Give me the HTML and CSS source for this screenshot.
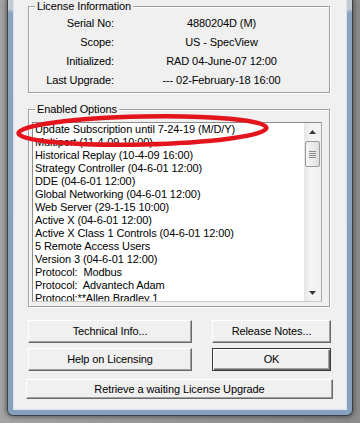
FILE: index.html
```html
<!DOCTYPE html>
<html lang="en">
<head>
    <meta charset="UTF-8">
    <title>License Information</title>
    <link rel="stylesheet" href="styles.css">
</head>
<body>

    <!-- Dialog Window -->
    <div class="window">
        <div class="client">

            <!-- License Information -->
            <fieldset class="group group-info">
                <legend>License Information</legend>
                <div class="info-grid">
                    <span class="label">Serial No:</span><span class="value">4880204D (M)</span>
                    <span class="label">Scope:</span><span class="value">US - SpecView</span>
                    <span class="label">Initialized:</span><span class="value">RAD 04-June-07 12:00</span>
                    <span class="label">Last Upgrade:</span><span class="value">--- 02-February-18 16:00</span>
                </div>
            </fieldset>

            <!-- Enabled Options -->
            <fieldset class="group group-options">
                <legend>Enabled Options</legend>
                <div class="listbox">
                    <ul class="items">
                        <li>Update Subscription until 7-24-19 (M/D/Y)</li>
                        <li>Multiport (11-4-09 10:00)</li>
                        <li>Historical Replay (10-4-09 16:00)</li>
                        <li>Strategy Controller (04-6-01 12:00)</li>
                        <li>DDE (04-6-01 12:00)</li>
                        <li>Global Networking (04-6-01 12:00)</li>
                        <li>Web Server (29-1-15 10:00)</li>
                        <li>Active X (04-6-01 12:00)</li>
                        <li>Active X Class 1 Controls (04-6-01 12:00)</li>
                        <li>5 Remote Access Users</li>
                        <li>Version 3 (04-6-01 12:00)</li>
                        <li>Protocol:  Modbus</li>
                        <li>Protocol:  Advantech Adam</li>
                        <li>Protocol:**Allen Bradley 1</li>
                    </ul>
                    <div class="scrollbar">
                        <div class="arrow">
                            <svg width="7" height="4" viewBox="0 0 7 4"><polygon points="3.5,0 7,4 0,4" fill="#3a3a3a"/></svg>
                        </div>
                        <div class="thumb">
                            <span class="grip"></span>
                        </div>
                        <div class="track"></div>
                        <div class="arrow">
                            <svg width="7" height="4" viewBox="0 0 7 4"><polygon points="0,0 7,0 3.5,4" fill="#3a3a3a"/></svg>
                        </div>
                    </div>
                </div>
            </fieldset>

            <!-- Buttons -->
            <div class="buttons">
                <button class="btn">Technical Info...</button>
                <button class="btn">Release Notes...</button>
                <button class="btn">Help on Licensing</button>
                <button class="btn btn-default">OK</button>
                <button class="btn btn-wide">Retrieve a waiting License Upgrade</button>
            </div>
        </div>

        <!-- Red marker drawn over the list -->
        <svg class="highlight" width="264" height="44" viewBox="0 0 264 44">
            <ellipse cx="129.5" cy="21.5" rx="124" ry="14" fill="none" stroke="#e3141b" stroke-width="4.5" transform="rotate(-1.2 129.5 21.5)"/>
        </svg>
    </div>

</body>
</html>
```

FILE: styles.css
```css
body {
    margin: 0;
    height: 423px;
    overflow: hidden;
    background: linear-gradient(to right, #a4a4a4, #8c8c8c);
    font-family: "Liberation Sans", Arial, sans-serif;
    font-size: 11px;
    letter-spacing: -0.1px;
    color: #000;
}

/* Window frame */
.window {
    position: relative;
    box-sizing: border-box;
    width: 346px;
    height: 416px;
    margin-left: 7px;
    padding: 0 5px 5px 5px;
    border: 1px solid #3c4148;
    border-top: 0;
    border-radius: 0 0 6px 6px;
    background: linear-gradient(#c2cad4 0, #c2cad4 9px, #8aa3c1 13px, #87a0be 100%);
    box-shadow: 0 0 5px 1px rgba(0, 0, 0, 0.45);
}
.client {
    box-sizing: border-box;
    height: 100%;
    border: 1px solid #d9e3ee;
    border-top: 0;
    background-color: #f0f0f0;
}

/* Group boxes */
.group {
    box-sizing: border-box;
    width: 302px;
    margin: 0 0 0 14px;
    padding: 0;
    min-inline-size: 0;
    border: 1px solid #a0a0a0;
    box-shadow: inset 1px 1px #fff, 1px 1px #fff;
}
.group legend {
    margin-left: 6px;
    padding: 0 2px;
    line-height: 13px;
    background-color: #f0f0f0;
}
.group-info {
    padding-bottom: 3px;
}
.group-options {
    margin-top: 10px;
    padding-bottom: 4px;
}

.info-grid {
    display: grid;
    grid-template-columns: 85px 1fr;
    grid-auto-rows: 19px;
    align-items: center;
}
.info-grid .label {
    text-align: right;
}
.info-grid .value {
    text-align: center;
}

/* List box */
.listbox {
    display: flex;
    width: 290px;
    height: 180px;
    box-sizing: border-box;
    margin: 6px 0 0 3px;
    border: 1px solid #8c8c8c;
    border-right-color: #a8a8a8;
    border-bottom-color: #c8c8c8;
    background-color: #fff;
}
.items {
    flex: 1;
    margin: 0;
    padding: 0 0 0 2px;
    list-style: none;
    overflow: hidden;
    line-height: 13px;
}
.items li {
    white-space: pre;
}
.scrollbar {
    display: flex;
    flex-direction: column;
    width: 17px;
    background: linear-gradient(to right, #e6e6e6, #f4f4f4 40%, #f0f0f0);
}
.arrow {
    display: flex;
    align-items: center;
    justify-content: center;
    height: 17px;
    flex-shrink: 0;
}
.thumb {
    display: flex;
    align-items: center;
    justify-content: center;
    box-sizing: border-box;
    height: 26px;
    margin: 1px 1px 0 1px;
    border: 1px solid #9a9a9a;
    border-radius: 2px;
    background: linear-gradient(to right, #f6f6f6, #ececec 50%, #dedede);
}
.grip {
    width: 7px;
    height: 7px;
    background: repeating-linear-gradient(#8a8a8a 0, #8a8a8a 1px, transparent 1px, transparent 2px);
}
.track {
    flex: 1;
}

/* Buttons */
.buttons {
    display: grid;
    grid-template-columns: 164px 119px;
    grid-auto-rows: 23px;
    column-gap: 20px;
    row-gap: 5px;
    margin-top: 13px;
    padding-left: 14px;
}
.btn {
    margin: 0;
    padding: 0;
    font-family: inherit;
    font-size: 11px;
    line-height: 13px;
    letter-spacing: -0.1px;
    color: #000;
    background-color: #f0f0f0;
    border: 1px solid;
    border-color: #fff #6a6a6a #6a6a6a #fff;
    box-shadow: inset -1px -1px #a0a0a0;
}
.btn-default {
    border-color: #3a3a3a;
    box-shadow: inset 1px 1px #fff, inset -1px -1px #6a6a6a, inset -2px -2px #a0a0a0;
}
.btn-wide {
    grid-column: 1 / 3;
    margin: 3px -2px 0 -2px;
}

/* Red highlight ellipse */
.highlight {
    position: absolute;
    left: 5px;
    top: 109px;
}
```
